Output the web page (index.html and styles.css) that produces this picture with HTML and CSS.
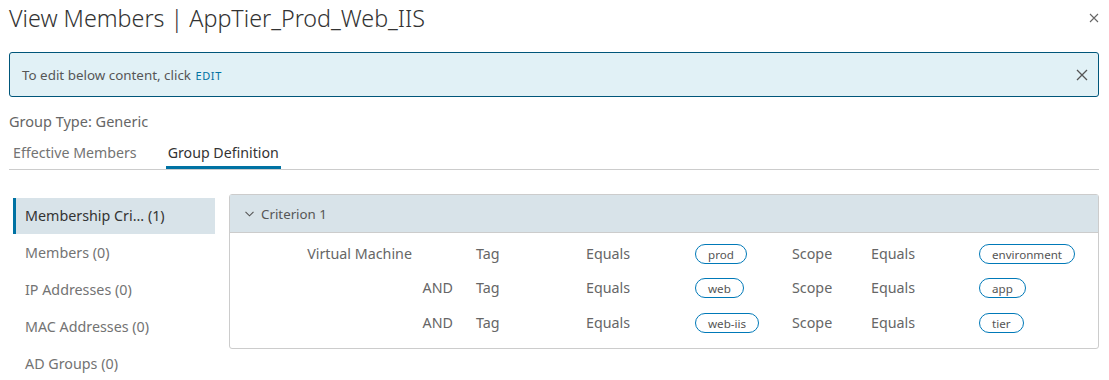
FILE: index.html
```html
<!DOCTYPE html>
<html>
<head>
<meta charset="utf-8">
<link rel="stylesheet" href="styles.css">
</head>
<body>
<div class="modal">
  <header class="modal-header">
    <h1 class="title">View Members | AppTier_Prod_Web_IIS</h1>
    <button class="close-btn" aria-label="Close">
      <svg width="10" height="10" viewBox="0 0 10 10"><path d="M1 1L9 9M9 1L1 9" stroke="#666" stroke-width="1.1" fill="none"/></svg>
    </button>
  </header>

  <div class="alert">
    <span class="alert-text">To edit below content, click <a class="edit-link">EDIT</a></span>
    <button class="alert-close" aria-label="Close">
      <svg width="12" height="12" viewBox="0 0 12 12"><path d="M1 1L11 11M11 1L1 11" stroke="#555" stroke-width="1.3" fill="none"/></svg>
    </button>
  </div>

  <div class="group-type">Group Type: Generic</div>

  <nav class="tabs">
    <div class="tab">Effective Members</div>
    <div class="tab active">Group Definition</div>
  </nav>

  <div class="content">
    <ul class="side-nav">
      <li class="side-item active">Membership Cri... (1)</li>
      <li class="side-item">Members (0)</li>
      <li class="side-item">IP Addresses (0)</li>
      <li class="side-item">MAC Addresses (0)</li>
      <li class="side-item">AD Groups (0)</li>
    </ul>

    <section class="criterion">
      <div class="crit-header">
        <svg class="chev" width="9" height="6" viewBox="0 0 9 6"><path d="M0.5 0.8L4.5 4.8L8.5 0.8" stroke="#555" stroke-width="1.1" fill="none"/></svg>
        <span>Criterion 1</span>
      </div>
      <div class="crit-body">
        <div class="c-first vm">Virtual Machine</div>
        <div class="c-key">Tag</div>
        <div class="c-op">Equals</div>
        <div class="c-val"><span class="pill">prod</span></div>
        <div class="c-scope">Scope</div>
        <div class="c-op2">Equals</div>
        <div class="c-val2"><span class="pill">environment</span></div>

        <div class="c-first">AND</div>
        <div class="c-key">Tag</div>
        <div class="c-op">Equals</div>
        <div class="c-val"><span class="pill">web</span></div>
        <div class="c-scope">Scope</div>
        <div class="c-op2">Equals</div>
        <div class="c-val2"><span class="pill">app</span></div>

        <div class="c-first">AND</div>
        <div class="c-key">Tag</div>
        <div class="c-op">Equals</div>
        <div class="c-val"><span class="pill">web-iis</span></div>
        <div class="c-scope">Scope</div>
        <div class="c-op2">Equals</div>
        <div class="c-val2"><span class="pill">tier</span></div>
      </div>
    </section>
  </div>
</div>
</body>
</html>
```
FILE: styles.css
```css
* { box-sizing: border-box; }
html, body { margin: 0; padding: 0; background: #fff; }
body {
  font-family: "Noto Sans", "Open Sans", sans-serif;
  color: #565656;
  width: 1109px;
  height: 380px;
  overflow: hidden;
}
.modal { padding: 0 10px 0 9px; }

.modal-header {
  display: flex;
  align-items: center;
  justify-content: space-between;
  height: 35px;
}
.title {
  margin: 0;
  font-weight: 300;
  font-size: 23.3px;
  color: #333;
  line-height: 34px;
}
.close-btn {
  border: 0; background: none; padding: 0; margin-right: 0;
  display: flex;
}

.alert {
  margin-top: 17px;
  height: 45px;
  border: 1px solid #00567a;
  border-radius: 3px;
  background: #e1f1f6;
  display: flex;
  align-items: center;
  justify-content: space-between;
  padding: 0 10px 0 12px;
}
.alert-text { font-size: 13.4px; color: #565656; }
.edit-link {
  color: #0072a3;
  font-size: 11px;
  letter-spacing: 0.6px;
  margin-left: 1px;
}
.alert-close { border: 0; background: none; padding: 0; display: flex; }

.group-type {
  margin-top: 14px;
  font-size: 14.5px;
  color: #666;
  line-height: 20px;
}

.tabs {
  margin-top: 12px;
  display: flex;
  border-bottom: 1px solid #ccc;
  padding-left: 4px;
  gap: 29px;
}
.tab {
  font-size: 14.2px;
  color: #737373;
  line-height: 20px;
  padding: 0 0 3px 0;
  border-bottom: 3px solid transparent;
}
.tab.active {
  color: #333;
  border-bottom-color: #0072a3;
  padding: 0 2px 3px 2px;
}

.content {
  display: flex;
  margin-top: 24px;
  align-items: flex-start;
}
.side-nav {
  list-style: none;
  margin: 4px 0 0 4px;
  padding: 0;
  width: 202px;
  flex: none;
}
.side-item {
  height: 37px;
  line-height: 36px;
  font-size: 14.3px;
  color: #737373;
  padding-left: 12px;
}
.side-item.active {
  background: #d8e3e9;
  color: #333;
  border-left: 3px solid #0072a3;
  padding-left: 9px;
  height: 36px;
  margin-bottom: 1px;
}

.criterion {
  margin-left: 14px;
  flex: 1;
  border: 1px solid #ccc;
  border-radius: 3px;
  height: 155px;
}
.crit-header {
  height: 38px;
  background: #d8e3e9;
  border-bottom: 1px solid #ccc;
  display: flex;
  align-items: center;
  padding-left: 15px;
  font-size: 13.3px;
  color: #565656;
  gap: 7px;
}
.chev { margin-top: 1px; }
.crit-body {
  display: grid;
  grid-template-columns: 223px 110px 109px 120px 79px 108px 1fr;
  grid-auto-rows: 34.5px;
  padding-top: 3px;
  font-size: 14.3px;
  color: #666;
  align-items: center;
}
.c-first { text-align: right; }
.c-first.vm { padding-right: 41px; }
.c-key { padding-left: 23px; }
.c-op { padding-left: 23px; }
.c-val { padding-left: 23px; display: flex; }
.c-val2 { display: flex; }
.pill {
  display: inline-flex;
  align-items: center;
  border: 1px solid #0079b8;
  border-radius: 10px;
  height: 20px;
  line-height: 14px;
  font-size: 11.6px;
  color: #555;
  padding: 2px 12px 0 12px;
  margin-top: 1px;
}
```
